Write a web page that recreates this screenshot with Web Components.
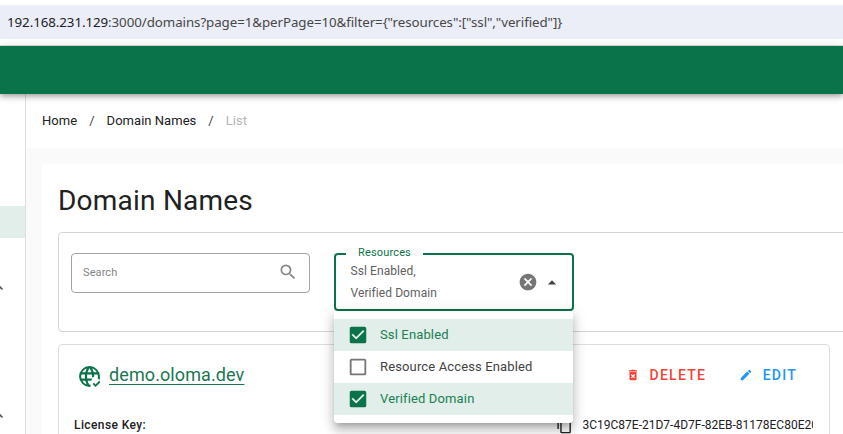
<!DOCTYPE html>
<html lang="en">
<head>
<meta charset="utf-8">
<title>Domain Names</title>
<style>
html,body{margin:0;height:100%;overflow:hidden;background:#fff}
body{font-family:Roboto,"Liberation Sans",sans-serif;color:#212121}
</style>
</head>
<body>
<domain-app></domain-app>
<script>
const define = (name, html, setup) => customElements.define(name, class extends HTMLElement {
  constructor() {
    super();
    const t = document.createElement('template');
    t.innerHTML = html;
    this.attachShadow({mode: 'open'}).append(t.content.cloneNode(true));
  }
  connectedCallback() { if (setup) setup(this, this.shadowRoot); }
});

define('address-bar', `<style>
:host{display:block;box-sizing:border-box;height:46px;padding:5px 0 6px;background:#fff;border-bottom:1px solid #dcdfdd}
div{height:34px;box-sizing:border-box;padding-left:7px;background:#ebeef7;font:13.330px/34px "Noto Sans",sans-serif;color:#474747;white-space:nowrap;letter-spacing:-.075px}
b{font-weight:400;color:#202124}
</style><div><b>192.168.231.129</b>:3000/domains?page=1&amp;perPage=10&amp;filter={"resources":["ssl","verified"]}</div>`);

define('top-bar', `<style>
:host{display:block;height:48px;background:#0b7349;position:relative;z-index:2;box-shadow:0 2px 4px -1px #0003,0 4px 5px #00000024,0 1px 10px #0000001f}
</style>`);

define('side-nav', `<style>
:host{display:block;box-sizing:border-box;width:26px;border-right:1px solid #dedede;background:#fff;overflow:hidden}
.active{margin-top:112px;height:32px;background:#e1eee9}
svg{display:block;width:12px;height:8px;margin-left:-8px;fill:none;stroke:#555;stroke-width:1.600}
.a{margin-top:45px}.b{margin-top:120px}
</style><div class="active"></div>
<svg class="a" viewBox="0 0 12 8"><path d="M1.500 6.500 6 2l4.500 4.500"/></svg>
<svg class="b" viewBox="0 0 12 8"><path d="M1.500 6.500 6 2l4.500 4.500"/></svg>`);

define('bread-crumbs', `<style>
:host{display:flex;box-sizing:border-box;height:54px;padding:0 0 1px 16px;align-items:center;background:#fff;font-size:13px;letter-spacing:.03px;color:#212121}
i{font-style:normal;width:29.500px;text-align:center;color:#424242}
.off{color:#b5b5b5}
</style><span>Home</span><i>/</i><span>Domain Names</span><i>/</i><span class="off">List</span>`);

define('search-field', `<style>
:host{display:flex;box-sizing:border-box;width:239px;height:40px;border:1px solid #a3a3a3;border-radius:4px;align-items:center;justify-content:space-between;padding:0 11px 2px 11px;font-size:11px;letter-spacing:.1px;color:#858585}
svg{width:20px;height:20px;fill:#858585}
</style><span>Search</span><svg viewBox="0 0 24 24"><path d="M9.500 3A6.500 6.500 0 0 1 16 9.500c0 1.610-.590 3.090-1.560 4.230l.270.270h.790l5 5-1.500 1.500-5-5v-.790l-.270-.270A6.516 6.516 0 0 1 9.500 16a6.500 6.500 0 0 1 0-13m0 2C7 5 5 7 5 9.500S7 14 9.500 14 14 12 14 9.500 12 5 9.500 5Z"/></svg>`);

define('select-field', `<style>
:host{display:block;position:relative;width:240px;height:58px}
.box{display:flex;box-sizing:border-box;height:58px;border:2px solid #0b7349;border-radius:4px;align-items:center;padding:0 10px 0 14.500px}
.value{flex:1;font-size:12px;line-height:22px;letter-spacing:.08px;color:#616161}
.clear{width:20px;height:20px;fill:#757575}
.arrow{width:20px;height:20px;margin-left:4px;fill:#424242}
label{position:absolute;left:12px;top:-8px;width:77px;height:16px;box-sizing:border-box;padding-left:12px;background:#fff;font-size:11px;line-height:16px;letter-spacing:.16px;color:#0b7349}
slot{display:block;position:absolute;left:0;top:58px;z-index:3}
</style><div class="box"><div class="value">Ssl Enabled,<br>Verified Domain</div>
<svg class="clear" viewBox="0 0 24 24"><path d="M12 2C6.470 2 2 6.470 2 12s4.470 10 10 10 10-4.470 10-10S17.530 2 12 2m5 13.590L15.590 17 12 13.410 8.410 17 7 15.590 10.590 12 7 8.410 8.410 7 12 10.590 15.590 7 17 8.410 13.410 12Z"/></svg>
<svg class="arrow" viewBox="0 0 24 24"><path d="m7 15 5-5 5 5Z"/></svg></div><label>Resources</label><slot></slot>`);

define('option-menu', `<style>
:host{display:block;box-sizing:border-box;width:239px;height:112px;padding:8px 0;background:#fff;border-radius:0 0 4px 4px;box-shadow:0 5px 5px -3px #0003,0 8px 10px 1px #00000024,0 3px 14px 2px #0000001f}
</style><slot></slot>`);

define('option-item', `<style>
:host{display:flex;box-sizing:border-box;height:32px;align-items:center;padding:0 0 1px 13px;font-size:13px;letter-spacing:.14px;color:#424242}
:host([checked]){background:#e1eee9;color:#1b8055}
svg{width:22px;height:22px;margin:0 11.500px 0 -.5px;fill:#757575}
:host([checked]) svg{fill:#0b7349}
</style><svg viewBox="0 0 24 24"><path/></svg><span><slot></slot></span>`, (h, r) => {
  r.querySelector('path').setAttribute('d', h.hasAttribute('checked')
    ? 'm10 17-5-5 1.410-1.420L10 14.170l7.590-7.590L19 8m0-5H5c-1.110 0-2 .89-2 2v14a2 2 0 0 0 2 2h14a2 2 0 0 0 2-2V5a2 2 0 0 0-2-2Z'
    : 'M19 3H5a2 2 0 0 0-2 2v14a2 2 0 0 0 2 2h14a2 2 0 0 0 2-2V5a2 2 0 0 0-2-2m0 2v14H5V5Z');
});

define('action-button', `<style>
:host{display:flex;align-items:center;font-size:14px;font-weight:500;letter-spacing:1.250px;color:var(--tone)}
svg{width:14px;height:14px;margin-right:9.500px;fill:currentColor}
</style><svg viewBox="0 0 24 24"><path/></svg><span><slot></slot></span>`, (h, r) => {
  r.querySelector('path').setAttribute('d', h.getAttribute('icon') === 'delete'
    ? 'M6 19a2 2 0 0 0 2 2h8a2 2 0 0 0 2-2V7H6zM8.460 11.880l1.410-1.410L12 12.590l2.120-2.120 1.410 1.410L13.410 14l2.120 2.120-1.410 1.410L12 15.410l-2.120 2.120-1.410-1.410L10.590 14zM15.500 4l-1-1h-5l-1 1H5v2h14V4Z'
    : 'M20.710 7.040c.390-.390.390-1.040 0-1.410l-2.340-2.340c-.370-.390-1.020-.390-1.410 0l-1.840 1.830 3.750 3.750M3 17.250V21h3.750L17.810 9.930l-3.750-3.750Z');
});

define('domain-card', `<style>
:host{display:block;box-sizing:border-box;width:772px;height:110px;border:1px solid #dedede;border-radius:4px;padding-left:15px;overflow:hidden}
.head{display:flex;align-items:center;height:60px}
.globe{width:25px;height:25px;margin:3px 7px 0 3px;fill:#0b7349}
a{font-size:18px;letter-spacing:.1px;color:#1b7650;text-decoration:underline;text-decoration-thickness:1px;text-underline-offset:3px;flex:1;padding-bottom:2px}
action-button{margin-right:33px}action-button:last-child{margin-right:32px}
.info{display:flex;align-items:center;height:18px;margin-top:11px;font-size:12px}
.key{flex:none;width:482px;font-weight:500;letter-spacing:.4px}
.copy{width:17px;height:17px;margin-right:9.500px;fill:#212121;flex:none}
.code{width:230px;overflow:hidden;white-space:nowrap;letter-spacing:0}
</style><div class="head"><svg class="globe" viewBox="0 0 24 24"><path fill-rule="evenodd" d="M12 2a10 10 0 1 0 0 20l1-.1v-2.200l-1 .3c-.8-1.100-1.400-2.600-1.800-4h3.500l.9-2H9.800c-.2-1.300-.2-2.700 0-4h4.400c.2.900.3 1.900.3 2.900l2-.7c0-.7 0-1.400-.1-2.200h3.300c.2.600.3 1.300.3 2v2.200l2 .8v-3A10 10 0 0 0 12 2m0 2c.9 1.200 1.500 2.600 1.900 4h-3.800c.4-1.400 1-2.800 1.900-4m-2.600.4C8.800 5.500 8.300 6.700 8 8H5c1-1.700 2.500-3 4.400-3.600m5.200 0C16.500 5 18 6.300 19 8h-3c-.3-1.300-.8-2.500-1.400-3.600M4.300 10h3.400c-.2 1.300-.2 2.700 0 4H4.300a8 8 0 0 1 0-4M5 16h3c.3 1.300.8 2.500 1.400 3.600A8 8 0 0 1 5 16"/><path d="m17.750 22.160-2.750-3L16.160 18l1.590 1.590L21.340 16l1.160 1.410Z"/></svg>
<a>demo.oloma.dev</a><action-button icon="delete" style="--tone:#f44336">DELETE</action-button><action-button icon="edit" style="--tone:#2196f3">EDIT</action-button></div>
<div class="info"><span class="key">License Key:</span><svg class="copy" viewBox="0 0 24 24"><path d="M19 21H8V7h11m0-2H8a2 2 0 0 0-2 2v14a2 2 0 0 0 2 2h11a2 2 0 0 0 2-2V7a2 2 0 0 0-2-2m-3-4H4a2 2 0 0 0-2 2v14h2V3h12Z"/></svg><span class="code">3C19C87E-21D7-4D7F-82EB-81178EC80E20</span></div>`);

define('domain-app', `<style>
:host{display:flex;flex-direction:column;width:843px;height:434px;overflow:hidden}
.body{display:flex;height:340px}
main{flex:1;min-width:0;background:#fafafa}
.sheet{box-sizing:border-box;margin:16px 0 0 16px;height:270px;background:#fff;border-radius:4px 0 0 0;padding:16px 0 0 16px;overflow:hidden}
h1{margin:0 0 11px;height:41px;font-size:28px;line-height:41px;font-weight:400;letter-spacing:.22px}
.filters{display:flex;gap:24px;align-items:flex-start;box-sizing:border-box;height:100px;width:800px;border:1px solid #d5d5d5;border-radius:4px;padding:20px 0 0 12px;margin-bottom:12px}
</style><address-bar></address-bar><top-bar></top-bar>
<div class="body"><side-nav></side-nav><main><bread-crumbs></bread-crumbs>
<div class="sheet"><h1>Domain Names</h1>
<div class="filters"><search-field></search-field><select-field><option-menu><option-item checked>Ssl Enabled</option-item><option-item>Resource Access Enabled</option-item><option-item checked>Verified Domain</option-item></option-menu></select-field></div>
<domain-card></domain-card></div></main></div>`);
</script>
</body>
</html>
